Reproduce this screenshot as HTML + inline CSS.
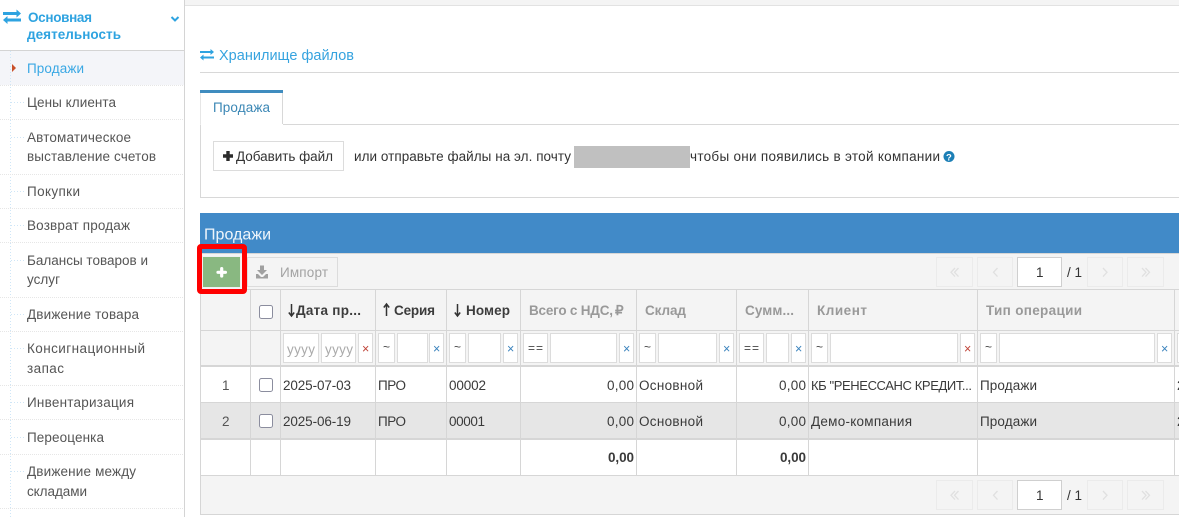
<!DOCTYPE html>
<html><head><meta charset="utf-8"><style>
html,body{margin:0;padding:0;background:#fff;width:1179px;height:517px;overflow:hidden}
svg{display:block}
text{font-family:"Liberation Sans",sans-serif;font-size:13.5px;fill:#3a3a3a}
.m text{fill:#555}
.b text,text.b{font-weight:bold}
.h text{font-weight:bold;font-size:13.5px;fill:#3c3c3c}
.g text{font-weight:bold;font-size:13.5px;fill:#999}
.f rect{fill:#fff;stroke:#dcdcdc;stroke-width:1}
.x text{font-size:12.5px;fill:#3b83bd}
.o text{font-size:12px;fill:#444}
.l line{stroke:#d6d6d6;stroke-width:1}
.d line{stroke:#cfe6f7;stroke-dasharray:1 2}
.s line{stroke:#e6e6e6;stroke-dasharray:1 1}
.p rect{fill:#f4f4f4;stroke:#ebebeb}
.p path{fill:none;stroke:#e0e0e0;stroke-width:1.3}
</style></head><body>
<svg width="1179" height="517" viewBox="0 0 1179 517" xmlns="http://www.w3.org/2000/svg">
<rect width="1179" height="517" fill="#fff"/>

<!-- top strip -->
<rect x="185" y="0" width="994" height="5" fill="#f4f4f4"/>
<line x1="185" y1="5.500" x2="1179" y2="5.500" stroke="#e2e2e2"/>

<!-- sidebar -->
<rect x="0" y="51" width="184" height="34" fill="#f4f5f9"/>
<line x1="184.500" y1="0" x2="184.500" y2="517" stroke="#d4d4d4"/>
<line x1="0" y1="50.500" x2="184" y2="50.500" stroke="#d4d4d4"/>
<path d="M3 12h13.500V9.500L21 13.500l-4.500 4V15H3zM21 18.500v3H7.500V24L3 20l4.500-4v2.500z" fill="#2ea3e0"/>
<text class="b" x="28" y="22" textLength="64" style="fill:#2ea3e0;font-size:13.500px">Основная</text>
<text class="b" x="27" y="39" textLength="94" style="fill:#2ea3e0;font-size:13.500px">деятельность</text>
<path d="M171.500 17l3.500 3.500 3.500-3.500" stroke="#2ea3e0" stroke-width="2" fill="none"/>
<g class="d">
<line x1="10.500" y1="51" x2="10.500" y2="517"/>
<line x1="11" y1="102.500" x2="24" y2="102.500"/>
<line x1="11" y1="137.500" x2="24" y2="137.500"/>
<line x1="11" y1="191.500" x2="24" y2="191.500"/>
<line x1="11" y1="225.500" x2="24" y2="225.500"/>
<line x1="11" y1="260.500" x2="24" y2="260.500"/>
<line x1="11" y1="314.500" x2="24" y2="314.500"/>
<line x1="11" y1="348.500" x2="24" y2="348.500"/>
<line x1="11" y1="402.500" x2="24" y2="402.500"/>
<line x1="11" y1="437.500" x2="24" y2="437.500"/>
<line x1="11" y1="471.500" x2="24" y2="471.500"/>
</g>
<g class="s">
<line x1="0" y1="85.500" x2="184" y2="85.500"/><line x1="0" y1="119.500" x2="184" y2="119.500"/>
<line x1="0" y1="174.500" x2="184" y2="174.500"/><line x1="0" y1="208.500" x2="184" y2="208.500"/>
<line x1="0" y1="242.500" x2="184" y2="242.500"/><line x1="0" y1="297.500" x2="184" y2="297.500"/>
<line x1="0" y1="331.500" x2="184" y2="331.500"/><line x1="0" y1="385.500" x2="184" y2="385.500"/>
<line x1="0" y1="419.500" x2="184" y2="419.500"/><line x1="0" y1="454.500" x2="184" y2="454.500"/>
<line x1="0" y1="508.500" x2="184" y2="508.500"/>
</g>
<path d="M12 64v8l4-4z" fill="#c9502a"/>
<text x="27" y="73" textLength="57" style="fill:#3aa8e4">Продажи</text>
<g class="m">
<text x="27" y="107" textLength="89">Цены клиента</text>
<text x="27" y="142" textLength="104">Автоматическое</text>
<text x="27" y="161" textLength="129">выставление счетов</text>
<text x="27" y="196" textLength="53">Покупки</text>
<text x="27" y="230" textLength="103">Возврат продаж</text>
<text x="27" y="265" textLength="121">Балансы товаров и</text>
<text x="27" y="284" textLength="33">услуг</text>
<text x="27" y="319" textLength="112">Движение товара</text>
<text x="27" y="353" textLength="118">Консигнационный</text>
<text x="27" y="373" textLength="37">запас</text>
<text x="27" y="407" textLength="107">Инвентаризация</text>
<text x="27" y="442" textLength="77">Переоценка</text>
<text x="27" y="476" textLength="109">Движение между</text>
<text x="27" y="496" textLength="60">складами</text>
</g>

<!-- storage heading -->
<path d="M200 51h10.500V49l3.500 3-3.500 3v-2H200zM214 56.500v2H203.500v2L200 57.500l3.500-3v2z" fill="#2ea3e0"/>
<text x="219" y="60" textLength="135" style="fill:#36a3df;font-size:14.500px">Хранилище файлов</text>
<line x1="200" y1="72.500" x2="1179" y2="72.500" stroke="#d8d8d8"/>

<!-- tab panel -->
<path d="M200.500 124.500V197.500H1179" fill="none" stroke="#d8d8d8"/>
<path d="M283 124.500H1179" fill="none" stroke="#d8d8d8"/>
<path d="M282.500 93V124" stroke="#d8d8d8" fill="none"/>
<path d="M200.500 93V124" stroke="#e6e6e6" fill="none"/>
<rect x="200" y="90" width="83" height="3" fill="#3f8cbf"/>
<text x="213" y="112" textLength="57" style="fill:#3b87b5">Продажа</text>
<rect x="213.500" y="141.500" width="130" height="29" fill="#fff" stroke="#dcdcdc"/>
<path d="M223 154.300h3.300V151h3.400v3.300h3.300v3.400h-3.300v3.300h-3.400v-3.300H223z" fill="#2c2c2c"/>
<text x="236" y="161" textLength="97" style="fill:#333">Добавить файл</text>
<text x="354" y="161" textLength="217" style="fill:#333">или отправьте файлы на эл. почту</text>
<rect x="574" y="146" width="116" height="22" fill="#c0c0c0"/>
<text x="690" y="161" textLength="250" style="fill:#333">чтобы они появились в этой компании</text>
<circle cx="949" cy="156.500" r="5.500" fill="#1c7fb6"/>
<text x="946" y="160.500" style="font-size:9.500px;font-weight:bold;fill:#fff">?</text>

<!-- grid panel header -->
<rect x="200" y="213" width="979" height="40" fill="#418ac8"/>
<text x="204" y="239.500" textLength="67" style="fill:#eef5fb;font-size:16px">Продажи</text>
<rect x="200" y="254" width="979" height="36" fill="#f4f4f4"/>
<rect x="200" y="290" width="979" height="76" fill="#f4f4f4"/>

<!-- import -->
<rect x="247.500" y="257.500" width="90" height="29" fill="#f4f4f4" stroke="#dcdcdc"/>
<path d="M260 265.500h4v4.500h3l-5 5-5-5h3zM256 274h2l3 3h2l3-3h2v4.500h-12z" fill="#a0a0a0"/>
<text x="280" y="277" textLength="48" style="fill:#a3a3a3">Импорт</text>

<!-- rows -->
<rect x="200" y="403" width="979" height="35" fill="#e6e6e6"/>
<rect x="200" y="475" width="979" height="39" fill="#f4f4f4"/>

<g class="l">
<line x1="200" y1="253.500" x2="1179" y2="253.500"/>
<line x1="200" y1="289.500" x2="1179" y2="289.500"/>
<line x1="200" y1="330.500" x2="1179" y2="330.500"/>
<line x1="200" y1="402.500" x2="1179" y2="402.500"/>
<line x1="200" y1="475.500" x2="1179" y2="475.500"/>
<line x1="200" y1="514.500" x2="1179" y2="514.500"/>
<line x1="200.500" y1="254" x2="200.500" y2="515"/>
<line x1="250.500" y1="290" x2="250.500" y2="475"/>
<line x1="280.500" y1="290" x2="280.500" y2="475"/>
<line x1="375.500" y1="290" x2="375.500" y2="475"/>
<line x1="446.500" y1="290" x2="446.500" y2="475"/>
<line x1="520.500" y1="290" x2="520.500" y2="475"/>
<line x1="636.500" y1="290" x2="636.500" y2="475"/>
<line x1="736.500" y1="290" x2="736.500" y2="475"/>
<line x1="808.500" y1="290" x2="808.500" y2="475"/>
<line x1="977.500" y1="290" x2="977.500" y2="475"/>
<line x1="1174.500" y1="290" x2="1174.500" y2="475"/>
</g>
<rect x="200" y="365" width="979" height="2" fill="#d6d6d6"/>
<rect x="200" y="438" width="979" height="2" fill="#d6d6d6"/>

<!-- headers -->
<rect x="259.500" y="305.500" width="13" height="13" rx="2" fill="#fff" stroke="#8b8d9e"/>
<g class="h">
<path d="M291.500 304v11M288.800 312.500l2.700 3.500 2.700-3.500" stroke="#333" stroke-width="1.500" fill="none"/>
<text x="296" y="315" textLength="65">Дата пр...</text>
<path d="M386.500 316v-11M383.800 307.500l2.700-3.500 2.700 3.500" stroke="#333" stroke-width="1.500" fill="none"/>
<text x="394" y="315" textLength="41">Серия</text>
<path d="M457.500 304v11M454.800 312.500l2.700 3.500 2.700-3.500" stroke="#333" stroke-width="1.500" fill="none"/>
<text x="466" y="315" textLength="44">Номер</text>
</g>
<g class="g">
<text x="529" y="315" textLength="84">Всего с НДС,</text>
<text x="615" y="315">₽</text>
<text x="645" y="315" textLength="41">Склад</text>
<text x="745" y="315" textLength="49">Сумм...</text>
<text x="817" y="315" textLength="50">Клиент</text>
<text x="986" y="315" textLength="96">Тип операции</text>
</g>

<!-- filters -->
<g class="f">
<rect x="283.500" y="333.500" width="35" height="29"/><rect x="321.500" y="333.500" width="34" height="29"/><rect x="358.500" y="333.500" width="14" height="29"/>
<rect x="378.500" y="333.500" width="16" height="29"/><rect x="397.500" y="333.500" width="30" height="29"/><rect x="429.500" y="333.500" width="14" height="29"/>
<rect x="449.500" y="333.500" width="16" height="29"/><rect x="468.500" y="333.500" width="32" height="29"/><rect x="503.500" y="333.500" width="14" height="29"/>
<rect x="523.500" y="333.500" width="24" height="29"/><rect x="550.500" y="333.500" width="66" height="29"/><rect x="619.500" y="333.500" width="14" height="29"/>
<rect x="639.500" y="333.500" width="16" height="29"/><rect x="658.500" y="333.500" width="58" height="29"/><rect x="719.500" y="333.500" width="14" height="29"/>
<rect x="739.500" y="333.500" width="24" height="29"/><rect x="766.500" y="333.500" width="22" height="29"/><rect x="791.500" y="333.500" width="14" height="29"/>
<rect x="811.500" y="333.500" width="16" height="29"/><rect x="830.500" y="333.500" width="127" height="29"/><rect x="960.500" y="333.500" width="14" height="29"/>
<rect x="980.500" y="333.500" width="16" height="29"/><rect x="999.500" y="333.500" width="155" height="29"/><rect x="1157.500" y="333.500" width="14" height="29"/>
<rect x="1177.500" y="333.500" width="10" height="29"/>
</g>
<text x="287" y="354" textLength="28" style="fill:#aaa;font-size:13.500px">yyyy</text>
<text x="325" y="354" textLength="28" style="fill:#aaa;font-size:13.500px">yyyy</text>
<g class="x">
<text x="362" y="353" style="fill:#c0453a">×</text>
<text x="433" y="353">×</text>
<text x="507" y="353">×</text>
<text x="623" y="353">×</text>
<text x="723" y="353">×</text>
<text x="795" y="353">×</text>
<text x="964" y="353" style="fill:#c0453a">×</text>
<text x="1161" y="353">×</text>
</g>
<g class="o">
<text x="383" y="351">~</text><text x="454" y="351">~</text><text x="644" y="351">~</text><text x="816" y="351">~</text><text x="985" y="351">~</text>
<text x="528" y="352" textLength="15">==</text><text x="744" y="352" textLength="15">==</text>
</g>

<!-- data -->
<text x="222" y="390" textLength="6" style="fill:#555">1</text>
<text x="222" y="426" textLength="7" style="fill:#555">2</text>
<rect x="259.500" y="378.500" width="13" height="13" rx="2" fill="#fff" stroke="#8b8d9e"/>
<rect x="259.500" y="414.500" width="13" height="13" rx="2" fill="#fff" stroke="#8b8d9e"/>
<g>
<text x="283" y="390" textLength="68">2025-07-03</text>
<text x="378" y="390" textLength="28">ПРО</text>
<text x="449" y="390" textLength="37">00002</text>
<text x="607" y="390" textLength="27">0,00</text>
<text x="639" y="390" textLength="64">Основной</text>
<text x="779" y="390" textLength="27">0,00</text>
<text x="811" y="390" textLength="161" style="font-size:13px">КБ "РЕНЕССАНС КРЕДИТ...</text>
<text x="980" y="390" textLength="57">Продажи</text>
<text x="1177" y="390">2</text>
<text x="283" y="426" textLength="68">2025-06-19</text>
<text x="378" y="426" textLength="28">ПРО</text>
<text x="449" y="426" textLength="36">00001</text>
<text x="607" y="426" textLength="27">0,00</text>
<text x="639" y="426" textLength="64">Основной</text>
<text x="779" y="426" textLength="27">0,00</text>
<text x="811" y="426" textLength="101">Демо-компания</text>
<text x="980" y="426" textLength="57">Продажи</text>
<text x="1177" y="426">2</text>
<text class="b" x="608" y="462" textLength="26">0,00</text>
<text class="b" x="780" y="462" textLength="26">0,00</text>
</g>

<!-- pagers -->
<g class="p">
<rect x="936.500" y="257.500" width="36" height="29"/><rect x="977.500" y="257.500" width="35" height="29"/><rect x="1087.500" y="257.500" width="35" height="29"/><rect x="1127.500" y="257.500" width="36" height="29"/>
<path d="M955 268l-4 4.300 4 4.300M958.500 268l-4 4.300 4 4.300M997.500 268l-4 4.300 4 4.300M1103 268l4 4.300-4 4.300M1142 268l4 4.300-4 4.300M1145.500 268l4 4.300-4 4.300"/>
<rect x="936.500" y="480.500" width="36" height="29"/><rect x="977.500" y="480.500" width="35" height="29"/><rect x="1087.500" y="480.500" width="35" height="29"/><rect x="1127.500" y="480.500" width="36" height="29"/>
<path transform="translate(0 223)" d="M955 268l-4 4.300 4 4.300M958.500 268l-4 4.300 4 4.300M997.500 268l-4 4.300 4 4.300M1103 268l4 4.300-4 4.300M1142 268l4 4.300-4 4.300M1145.500 268l4 4.300-4 4.300"/>
</g>
<rect x="1017.500" y="257.500" width="44" height="29" fill="#fff" stroke="#cfcfcf"/>
<rect x="1017.500" y="480.500" width="44" height="29" fill="#fff" stroke="#cfcfcf"/>
<text x="1036" y="277" style="fill:#333">1</text><text x="1067" y="277" textLength="15" style="fill:#333">/ 1</text>
<text x="1036" y="500" style="fill:#333">1</text><text x="1067" y="500" textLength="15" style="fill:#333">/ 1</text>

<!-- add button with red highlight -->
<rect x="202" y="256" width="39" height="32" fill="#f0f0f0"/>
<rect x="203" y="257" width="37" height="30" fill="#89b881"/>
<path d="M218 272.300h7.400M221.700 268.600v7.400" stroke="#fff" stroke-width="3.200" stroke-linecap="round" fill="none"/>
<rect x="199.500" y="246.500" width="45" height="45" rx="1.500" fill="none" stroke="#fe0000" stroke-width="5"/>
</svg>
</body></html>
